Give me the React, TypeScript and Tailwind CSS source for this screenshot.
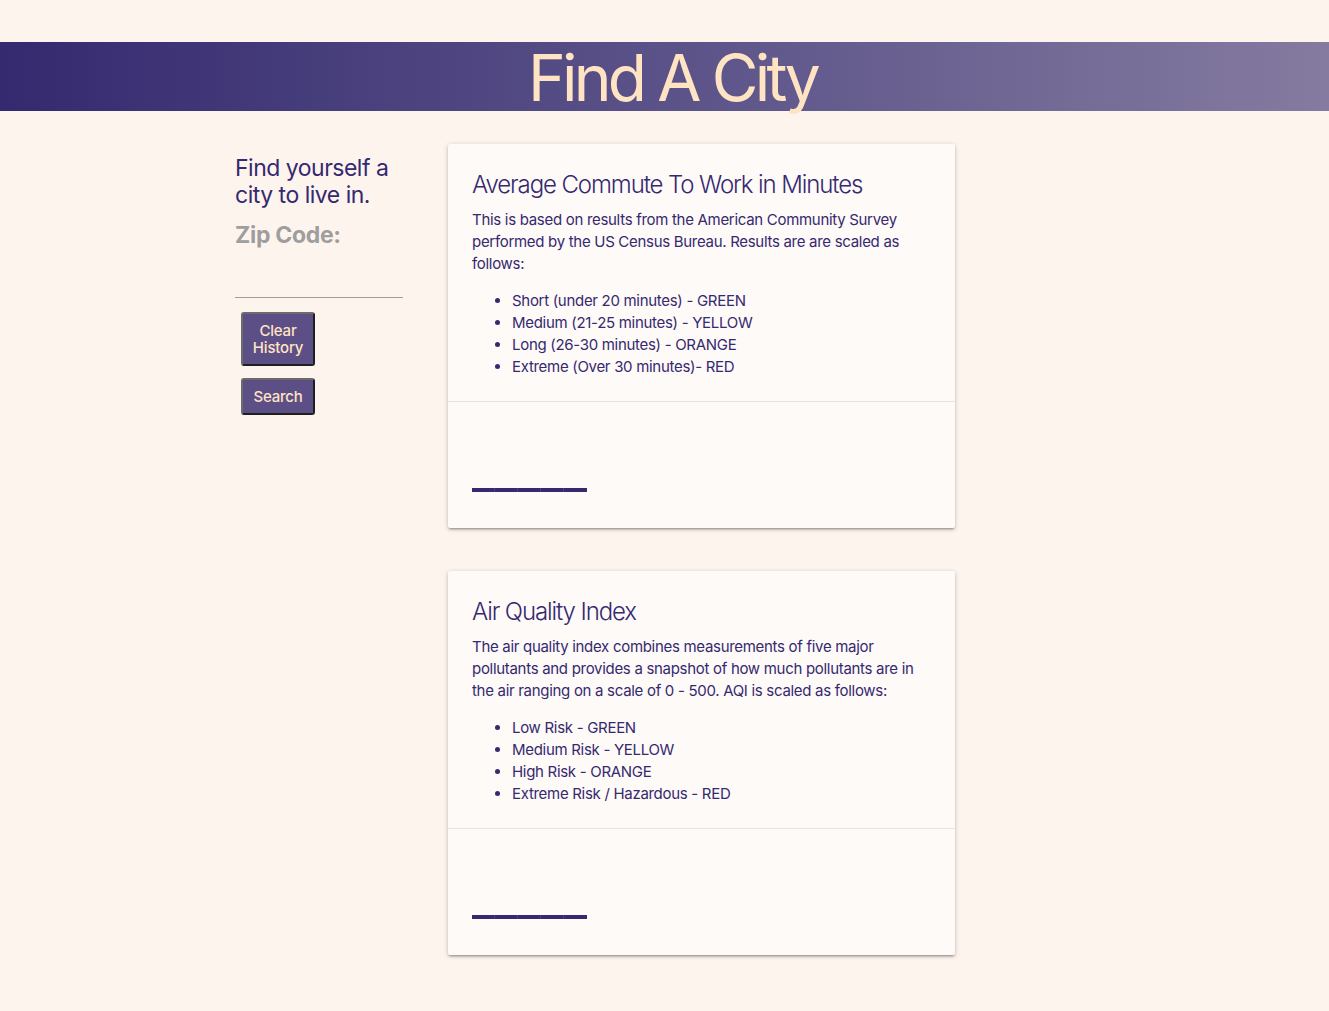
import React from "react";

const commuteScale = [
  "Short (under 20 minutes) - GREEN",
  "Medium (21-25 minutes) - YELLOW",
  "Long (26-30 minutes) - ORANGE",
  "Extreme (Over 30 minutes)- RED",
];

const aqiScale = [
  "Low Risk - GREEN",
  "Medium Risk - YELLOW",
  "High Risk - ORANGE",
  "Extreme Risk / Hazardous - RED",
];

function ScaleBar() {
  return (
    <div className="flex">
      {[0, 1, 2, 3, 4].map((i) => (
        <div
          key={i}
          className="h-[4px] w-[23px] bg-[#35296f] border-r border-[#4a3f80] last:border-r-0"
        />
      ))}
    </div>
  );
}

function InfoCard({
  title,
  body,
  items,
}: {
  title: string;
  body: string;
  items: string[];
}) {
  return (
    <div className="w-[507px] rounded-[2px] bg-[#fefaf8] shadow-[0_2px_2px_0_rgba(0,0,0,0.14),0_3px_1px_-2px_rgba(0,0,0,0.12),0_1px_5px_0_rgba(0,0,0,0.2)]">
      <div className="h-[257px] px-6 pt-[25px]">
        <h2 className="text-[24px] font-light leading-[32px] tracking-[-1.1px] text-[#35296f]">
          {title}
        </h2>
        <p className="mt-2 text-[15px] leading-[22px] tracking-[-0.3px] text-[#35296f]">
          {body}
        </p>
        <ul className="mt-[15px] list-disc pl-10 text-[15px] leading-[22px] tracking-[-0.3px] text-[#35296f]">
          {items.map((item) => (
            <li key={item}>{item}</li>
          ))}
        </ul>
      </div>
      <div className="h-[127px] border-t border-[#e8e3e1] px-6 pt-[86px]">
        <ScaleBar />
      </div>
    </div>
  );
}

export default function App() {
  return (
    <div className="min-h-screen bg-[#fef4ee] pt-[42px] pb-[55px] font-['Inter','Liberation_Sans',sans-serif]">
      <header className="flex h-[69px] justify-center bg-gradient-to-r from-[#35296f] to-[#857ba0]">
        <h1 className="pl-[16px] text-[64px] font-normal leading-[72px] tracking-[-3.8px] text-[#ffe4c4]">
          Find A City
        </h1>
      </header>

      <main className="flex pt-[33px] pl-[235px]">
        <aside className="w-[168px] pt-[11px]">
          <h3 className="text-[23px] leading-[27px] tracking-[-0.5px] text-[#35296f]">
            Find yourself a city to live in.
          </h3>
          <label className="mt-[13px] block text-[23px] font-bold leading-[27px] tracking-[-0.3px] text-[#9e9e9e]">
            Zip Code:
          </label>
          <input
            type="text"
            className="mt-[4px] block h-[45px] w-[168px] border-b border-[#9e9e9e] bg-transparent outline-none"
          />
          <div className="mt-[14px] flex flex-col items-start gap-[12px] pl-[6px]">
            <button className="w-[74px] rounded-[3px] border-2 border-t-[#6b6b6b] border-l-[#6b6b6b] border-r-[#1f1f1f] border-b-[#1f1f1f] bg-[#5c4f86] py-[8px] text-[15px] font-medium leading-[17px] tracking-[-0.2px] text-[#ffe4c4]">
              Clear
              <br />
              History
            </button>
            <button className="w-[74px] rounded-[3px] border-2 border-t-[#6b6b6b] border-l-[#6b6b6b] border-r-[#1f1f1f] border-b-[#1f1f1f] bg-[#5c4f86] py-[8px] text-[15px] font-medium leading-[17px] tracking-[-0.2px] text-[#ffe4c4]">
              Search
            </button>
          </div>
        </aside>

        <section className="ml-[45px] flex flex-col gap-[43px]">
          <InfoCard
            title="Average Commute To Work in Minutes"
            body="This is based on results from the American Community Survey performed by the US Census Bureau. Results are are scaled as follows:"
            items={commuteScale}
          />
          <InfoCard
            title="Air Quality Index"
            body="The air quality index combines measurements of five major pollutants and provides a snapshot of how much pollutants are in the air ranging on a scale of 0 - 500. AQI is scaled as follows:"
            items={aqiScale}
          />
        </section>
      </main>
    </div>
  );
}
